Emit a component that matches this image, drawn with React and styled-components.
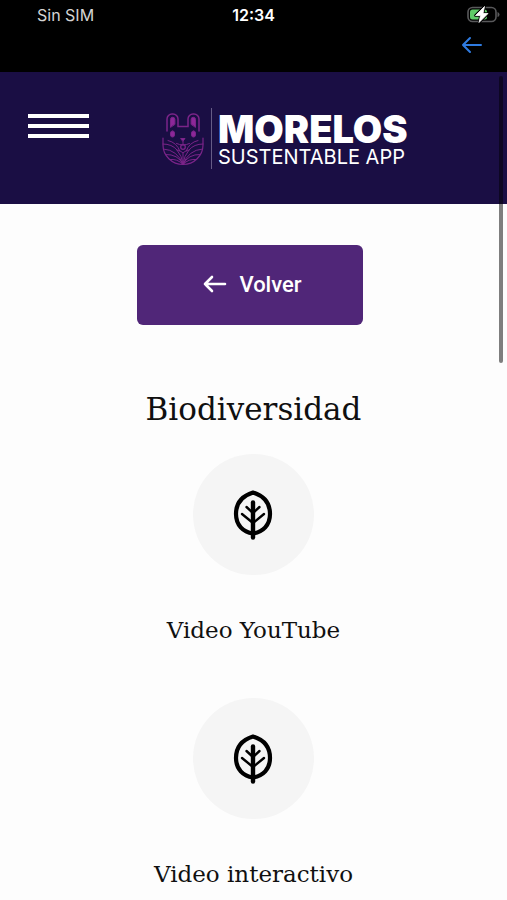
import React from 'react'
import styled, { createGlobalStyle } from 'styled-components'

const topics = ['Video YouTube', 'Video interactivo']

export default function App() {
  return (
    <Screen>
      <GlobalStyle />
      <StatusBar>
        <Carrier>Sin SIM</Carrier>
        <Clock>12:34</Clock>
        <BatteryIcon />
      </StatusBar>
      <BrowserBar>
        <BackButton type="button" aria-label="Atrás">
          <ArrowIcon width="22" height="18" stroke="2" />
        </BackButton>
      </BrowserBar>
      <View>
        <Navbar>
          <MenuButton type="button" aria-label="Menú">
            <span />
            <span />
            <span />
          </MenuButton>
          <Brand href="#inicio">
            <RabbitLogo />
            <BrandText>
              <BrandName>MORELOS</BrandName>
              <BrandTagline>SUSTENTABLE APP</BrandTagline>
            </BrandText>
          </Brand>
        </Navbar>
        <Content>
          <ReturnButton type="button">
            <ArrowIcon width="24" height="18" stroke="2.6" />
            Volver
          </ReturnButton>
          <Title>Biodiversidad</Title>
          <TopicList>
            {topics.map(topic => (
              <li key={topic}>
                <TopicLink href="#video">
                  <Circle>
                    <LeafIcon />
                  </Circle>
                  {topic}
                </TopicLink>
              </li>
            ))}
          </TopicList>
        </Content>
        <ScrollThumb />
      </View>
    </Screen>
  )
}

function ArrowIcon({ width, height, stroke }) {
  return (
    <svg width={width} height={height} viewBox={`0 0 ${width} ${height}`} fill="none" stroke="currentColor" strokeWidth={stroke} strokeLinecap="round" strokeLinejoin="round" aria-hidden="true">
      <path d={`M${width - 2} 9H2M9 2L2 9l7 7`} />
    </svg>
  )
}

function BatteryIcon() {
  return (
    <svg width="34" height="18" viewBox="0 0 34 18" aria-hidden="true">
      <rect x="2" y="1.5" width="28" height="14" rx="4.5" fill="none" stroke="#59595b" strokeWidth="1.6" />
      <path d="M31.500 6q2 .5 2 2.500t-2 2.500z" fill="#59595b" />
      <rect x="4" y="3.500" width="17" height="10" rx="2.500" fill="#5fcb68" />
      <path d="M18.500 .5L9.500 9.500h5L13 16.500l9-9h-5z" fill="#fff" stroke="#000" strokeWidth="2.600" strokeLinejoin="round" />
      <path d="M18.500 .5L9.500 9.500h5L13 16.500l9-9h-5z" fill="#fff" stroke="#fff" strokeWidth=".8" strokeLinejoin="round" />
    </svg>
  )
}

function RabbitLogo() {
  return (
    <svg width="42" height="54" viewBox="0 0 42 54" fill="none" stroke="#7b2489" strokeLinecap="round" aria-hidden="true">
      {/* ears and head */}
      <path d="M5 19V7a5 5 0 0 1 5-5h1a5 5 0 0 1 5 5v7.500h10V7a5 5 0 0 1 5-5h1a5 5 0 0 1 5 5v12" strokeWidth="1.500" />
      <path d="M8.500 15V7.500a2.200 2.200 0 0 1 4.400 0V12zM33.500 15V7.500a2.200 2.200 0 0 0-4.400 0V12z" fill="#8d2799" />
      {/* face */}
      <rect x="8.500" y="19" width="4" height="6" rx="2" fill="#8d2799" />
      <rect x="29.500" y="19" width="4" height="6" rx="2" fill="#8d2799" />
      <path d="M19 26.500h4l-2 2.500z" fill="#8d2799" />
      <path d="M21 29v4M14.500 31.500q6.500 3 13 0" />
      <circle cx="21" cy="35" r="2.300" strokeWidth="1.300" />
      {/* leaves */}
      <path d="M1 26v7a20 19.500 0 0 0 40 0v-7" strokeWidth="1.200" />
      <path d="M1 32q9 0 14 6t6 14q1-8 6-14t14-6" />
      <path d="M1.500 37q14 1 19.500 15.500Q26.500 38 40.500 37M3.500 42.500Q16 42 21 52.500q5-10.500 17.500-10M7.500 47.500q8-1 13.500 5 5.500-6 13.500-5" />
      <path d="M6 28.500q9 2 12 11M36 28.500q-9 2-12 11M15 38q2-1 6 3 4-4 6-3M21 41v11" />
    </svg>
  )
}

function LeafIcon() {
  return (
    <svg width="40" height="50" viewBox="0 0 40 50" fill="none" stroke="#000" strokeLinecap="round" strokeLinejoin="round" aria-hidden="true">
      <path d="M20 2.500C12 5 3 11 3 24c0 11 7 18 17 19.500C30 42 37 35 37 24 37 11 28 5 20 2.500z" strokeWidth="4.200" />
      <path d="M20 12.500v35" strokeWidth="4.400" />
      <path d="M9 24l11 9 11-9M13.500 17l6.500 6 6.500-6" strokeWidth="2.400" />
    </svg>
  )
}

const GlobalStyle = createGlobalStyle`
  *, *::before, *::after {
    box-sizing: border-box;
  }
  body {
    margin: 0;
    background: #fdfdfd;
    color: #101010;
    font-family: Roboto, sans-serif;
  }
  button {
    border: 0;
    padding: 0;
    background: none;
    font: inherit;
    cursor: pointer;
  }
  a {
    color: inherit;
    text-decoration: none;
  }
  svg {
    display: block;
  }
`

const Screen = styled.div`
  min-height: 100vh;
`

const StatusBar = styled.header`
  display: grid;
  grid-template-columns: 1fr auto 1fr;
  align-items: center;
  height: 30px;
  padding: 0 7px 0 37px;
  background: #000;
  color: #fff;
  font-family: Inter, sans-serif;
  font-size: 16px;
  line-height: 20px;
  svg {
    justify-self: end;
  }
`

const Carrier = styled.span`
  color: #d4d4d4;
`

const Clock = styled.time`
  margin-right: 30px;
  font-weight: 600;
`

const BrowserBar = styled.div`
  display: flex;
  justify-content: flex-end;
  height: 42px;
  padding: 6px 24px 0;
  background: #000;
`

const BackButton = styled.button`
  height: 18px;
  color: #2f7be0;
`

const View = styled.main`
  position: relative;
`

const Navbar = styled.nav`
  display: flex;
  align-items: flex-start;
  height: 132px;
  padding: 36px 28px 0;
  background: #1a0e44;
`

const MenuButton = styled.button`
  display: grid;
  gap: 6px;
  width: 61px;
  margin: 6px 73px 0 0;
  span {
    height: 4px;
    background: #fff;
  }
`

const Brand = styled.a`
  display: flex;
  align-items: center;
  gap: 7px;
  color: #fff;
`

const BrandText = styled.span`
  display: grid;
  padding-left: 6px;
  height: 61px;
  align-content: center;
  border-left: 1px solid #665c86;
  font-family: Inter, sans-serif;
  white-space: nowrap;
`

const BrandName = styled.strong`
  font-size: 38px;
  font-weight: 900;
  line-height: 36px;
`

const BrandTagline = styled.span`
  font-size: 20px;
  line-height: 20px;
`

const Content = styled.div`
  display: flex;
  flex-direction: column;
  align-items: center;
  padding-top: 41px;
`

const ReturnButton = styled.button`
  display: flex;
  align-items: center;
  justify-content: center;
  gap: 12px;
  width: 226px;
  height: 80px;
  margin-right: 8px;
  padding: 0 0 2px 6px;
  border-radius: 6px;
  background: #502678;
  color: #fff;
  font-size: 22px;
  font-weight: 500;
`

const Title = styled.h1`
  margin: 62px 0 0;
  font-family: 'Roboto Slab', 'DejaVu Serif', serif;
  font-size: 31px;
  font-weight: 400;
  line-height: 44px;
`

const TopicList = styled.ul`
  display: grid;
  gap: 52px;
  margin: 0;
  padding: 23px 0 0;
  list-style: none;
`

const TopicLink = styled.a`
  display: flex;
  flex-direction: column;
  align-items: center;
  gap: 39px;
  font-family: 'Roboto Slab', 'DejaVu Serif', serif;
  font-size: 23px;
  line-height: 32px;
`

const Circle = styled.span`
  display: grid;
  place-items: center;
  width: 121px;
  height: 121px;
  border-radius: 50%;
  background: #f5f5f5;
`

const ScrollThumb = styled.div`
  position: absolute;
  top: 4px;
  right: 4px;
  width: 4px;
  height: 287px;
  border-radius: 2px;
  background: rgba(0, 0, 0, 0.5);
`
